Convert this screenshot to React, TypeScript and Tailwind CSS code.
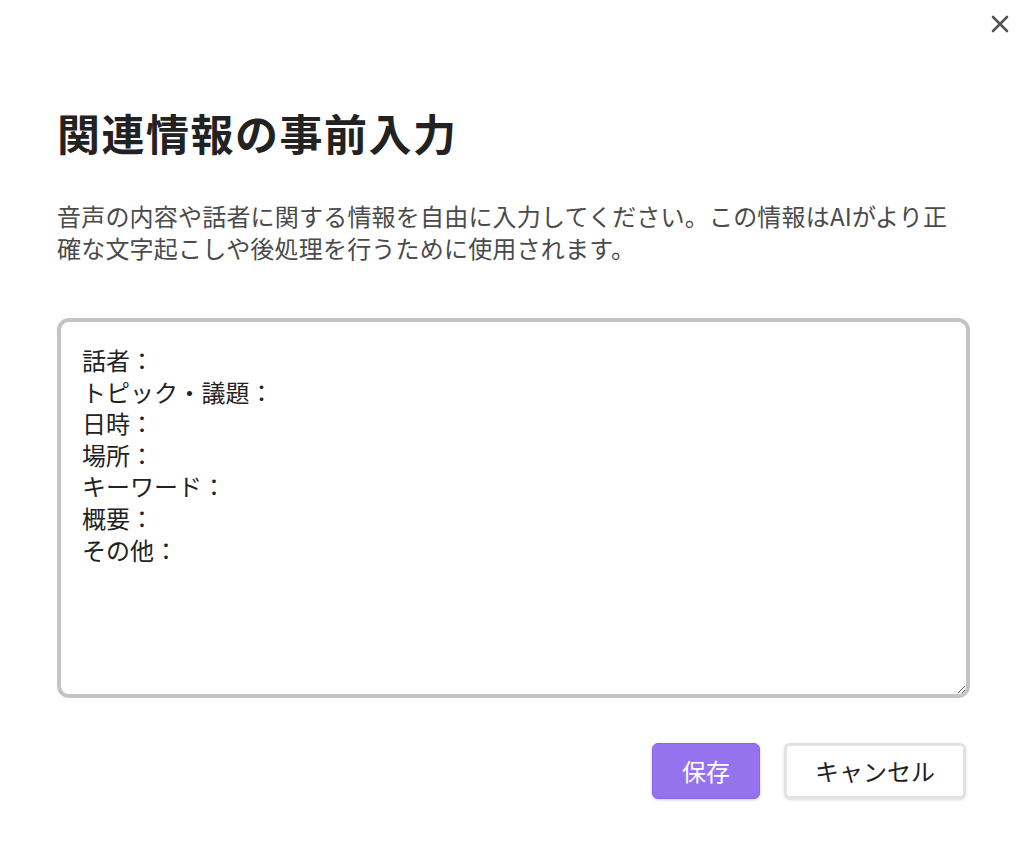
import React from "react";

const font = { fontFamily: '"Noto Sans CJK JP", "Noto Sans", sans-serif' };

export default function App() {
  const initial = "話者：\nトピック・議題：\n日時：\n場所：\nキーワード：\n概要：\nその他：";
  return (
    <div className="w-[1024px] h-[856px] bg-white relative" style={font}>
      <button className="absolute right-[12px] top-[12px] w-[24px] h-[24px] flex items-center justify-center text-[#555]">
        <svg width="20" height="20" viewBox="0 0 20 20" fill="none" stroke="currentColor" strokeWidth="2.6" strokeLinecap="round">
          <path d="M3 3 L17 17 M17 3 L3 17" />
        </svg>
      </button>
      <div className="pl-[57px] pr-[54px] pt-[100px] flex flex-col">
        <h1 className="text-[43px] leading-[64px] font-bold text-[#222] tracking-[1.5px]">関連情報の事前入力</h1>
        <p className="mt-[36px] text-[24px] leading-[32px] text-[#4a4a4a] tracking-[0.2px]">
          音声の内容や話者に関する情報を自由に入力してください。この情報はAIがより正確な文字起こしや後処理を行うために使用されます。
        </p>
        <textarea
          defaultValue={initial}
          className="mt-[54px] h-[380px] w-full border-[4px] border-[#c4c4c4] rounded-[12px] px-[21px] py-[22px] text-[24px] leading-[31.6px] text-[#222] outline-none resize-y"
          style={font}
        />
        <div className="mt-[45px] flex justify-end gap-[24px] pr-[4px]">
          <button className="w-[108px] h-[56px] rounded-[6px] bg-[#9572ee] text-white text-[24px] border border-[#8a66e6] shadow-[0_1px_3px_rgba(0,0,0,0.2)]">
            保存
          </button>
          <button className="w-[182px] h-[56px] rounded-[6px] bg-white text-[#222] text-[24px] border-[3px] border-[#e2e2e2] shadow-[0_1px_3px_rgba(0,0,0,0.15)]">
            キャンセル
          </button>
        </div>
      </div>
    </div>
  );
}
